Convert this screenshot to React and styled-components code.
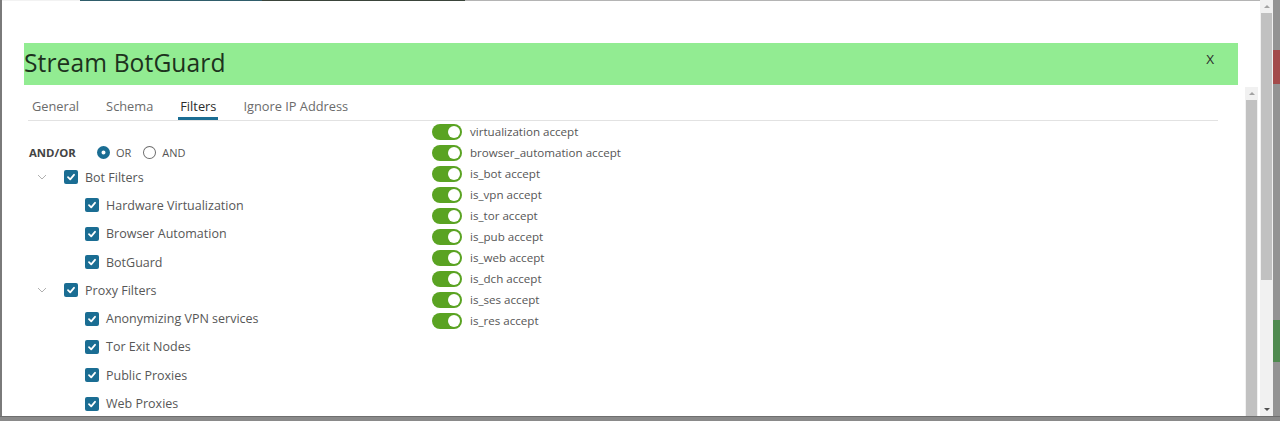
import React from "react";
import styled, { createGlobalStyle } from "styled-components";

const GlobalStyle = createGlobalStyle`
  html, body {
    margin: 0;
    padding: 0;
    height: 421px;
    overflow: hidden;
    background: #7e7e7e;
    font-family: "Open Sans", "Liberation Sans", sans-serif;
  }
  * { box-sizing: border-box; }
`;

const BOT_FILTERS = ["Hardware Virtualization", "Browser Automation", "BotGuard"];
const PROXY_FILTERS = [
  "Anonymizing VPN services",
  "Tor Exit Nodes",
  "Public Proxies",
  "Web Proxies",
];
const ACCEPTS = [
  "virtualization accept",
  "browser_automation accept",
  "is_bot accept",
  "is_vpn accept",
  "is_tor accept",
  "is_pub accept",
  "is_web accept",
  "is_dch accept",
  "is_ses accept",
  "is_res accept",
];

const Check = () => (
  <svg width="10" height="10" viewBox="0 0 10 10">
    <polyline
      points="2,5.2 4.2,7.3 8,2.8"
      fill="none"
      stroke="#fff"
      strokeWidth="1.8"
      strokeLinecap="round"
      strokeLinejoin="round"
    />
  </svg>
);

const Chevron = () => (
  <svg width="10" height="6" viewBox="0 0 10 6">
    <polyline points="1,1 5,5 9,1" fill="none" stroke="#b0b0b0" strokeWidth="1" />
  </svg>
);

const App = () => {
  return (
    <>
      <GlobalStyle />
      <Screen>
        <Stage>
          <Edge />
          <Modal>
            <TopStrip>
              <Strip $w={78} $c="#f2f2f2" />
              <Strip $w={182} $c="#2f5d6b" />
              <Strip $w={203} $c="#3a443a" />
              <Strip $c="#b4b4b4" />
            </TopStrip>
            <Dialog>
              <Header>
                <Title>Stream BotGuard</Title>
                <Close>X</Close>
              </Header>
              <Body>
                <Content>
                  <TabNav>
                    <Tab>General</Tab>
                    <Tab>Schema</Tab>
                    <Tab $active>Filters</Tab>
                    <Tab>Ignore IP Address</Tab>
                  </TabNav>
                  <Columns>
                    <LeftCol>
                      <ModeRow>
                        <ModeLabel>AND/OR</ModeLabel>
                        <RadioItem>
                          <Radio $checked />
                          OR
                        </RadioItem>
                        <RadioItem>
                          <Radio />
                          AND
                        </RadioItem>
                      </ModeRow>
                      <TreeRow>
                        <Chevron />
                        <CheckBox $parent>
                          <Check />
                        </CheckBox>
                        <Label>Bot Filters</Label>
                      </TreeRow>
                      {BOT_FILTERS.map((f) => (
                        <TreeRow key={f} $child>
                          <CheckBox>
                            <Check />
                          </CheckBox>
                          <Label>{f}</Label>
                        </TreeRow>
                      ))}
                      <TreeRow>
                        <Chevron />
                        <CheckBox $parent>
                          <Check />
                        </CheckBox>
                        <Label>Proxy Filters</Label>
                      </TreeRow>
                      {PROXY_FILTERS.map((f) => (
                        <TreeRow key={f} $child>
                          <CheckBox>
                            <Check />
                          </CheckBox>
                          <Label>{f}</Label>
                        </TreeRow>
                      ))}
                    </LeftCol>
                    <RightCol>
                      {ACCEPTS.map((a) => (
                        <ToggleRow key={a}>
                          <Toggle />
                          <ToggleLabel>{a}</ToggleLabel>
                        </ToggleRow>
                      ))}
                    </RightCol>
                  </Columns>
                </Content>
                <Scrollbar $inner>
                  <Arrow $up />
                  <Thumb />
                </Scrollbar>
              </Body>
            </Dialog>
          </Modal>
          <Scrollbar>
            <Arrow $up />
            <Thumb $h={267} />
            <Track />
            <Arrow />
          </Scrollbar>
          <RightEdge>
            <EdgeBlock $top={50} $h={34} $c="#a34a4a" />
            <EdgeBlock $top={320} $h={42} $c="#4f8a4f" />
          </RightEdge>
        </Stage>
        <Bottom />
      </Screen>
    </>
  );
};

export default App;

const Screen = styled.div`
  height: 421px;
  display: flex;
  flex-direction: column;
  background: #7e7e7e;
`;

const Stage = styled.div`
  height: 416px;
  display: flex;
`;

const Edge = styled.div`
  width: 2px;
  background: #7a7a7a;
`;

const Bottom = styled.div`
  flex: 1;
  background: #8a8a8a;
  border-top: 1px solid #6e6e6e;
`;

const Modal = styled.div`
  width: 1258px;
  background: #fff;
  display: flex;
  flex-direction: column;
`;

const TopStrip = styled.div`
  height: 1px;
  display: flex;
`;

const Strip = styled.div`
  width: ${(p) => (p.$w ? `${p.$w}px` : "auto")};
  flex: ${(p) => (p.$w ? "none" : 1)};
  background: ${(p) => p.$c};
`;

const Dialog = styled.div`
  flex: 1;
  min-height: 0;
  display: flex;
  flex-direction: column;
  padding: 42px 0 0 22px;
`;

const Header = styled.div`
  height: 42px;
  margin-right: 22px;
  background: #92ec92;
  display: flex;
  align-items: center;
  justify-content: space-between;
`;

const Title = styled.h3`
  margin: -4px 0 0 0;
  font-size: 24.6px;
  font-weight: 400;
  color: #1d321d;
  letter-spacing: 0.1px;
`;

const Close = styled.span`
  font-size: 13.5px;
  color: #2a2a2a;
  margin-right: 24px;
  margin-top: -10px;
`;

const Body = styled.div`
  flex: 1;
  min-height: 0;
  display: flex;
  margin-top: 2px;
`;

const Content = styled.div`
  flex: 1;
  overflow: hidden;
  padding-top: 9px;
`;

const TabNav = styled.nav`
  display: flex;
  gap: 23px;
  margin: 0 27px 0 4px;
  padding-left: 2px;
  border-bottom: 1px solid #e2e2e2;
`;

const Tab = styled.span`
  padding: 0 2px;
  line-height: 21px;
  font-size: 12.8px;
  color: ${(p) => (p.$active ? "#2b2b2b" : "#6b6b6b")};
  border-bottom: 3px solid ${(p) => (p.$active ? "#1a6d93" : "transparent")};
`;

const Columns = styled.div`
  display: flex;
`;

const LeftCol = styled.div`
  width: 408px;
  padding: 21px 0 0 5px;
  display: flex;
  flex-direction: column;
`;

const ModeRow = styled.div`
  height: 20px;
  display: flex;
  align-items: center;
  margin-bottom: 1px;
`;

const ModeLabel = styled.span`
  font-size: 11.4px;
  font-weight: 700;
  color: #444;
  width: 68px;
`;

const RadioItem = styled.label`
  display: flex;
  align-items: center;
  gap: 6px;
  font-size: 11px;
  color: #555;
  margin-right: 12px;
`;

const Radio = styled.span`
  width: 13px;
  height: 13px;
  border-radius: 50%;
  background: #fff;
  box-shadow: ${(p) =>
    p.$checked ? "inset 0 0 0 4.5px #1a6d93" : "inset 0 0 0 1px #6b6b6b"};
`;

const TreeRow = styled.div`
  height: 28.3px;
  display: flex;
  align-items: center;
  padding-left: ${(p) => (p.$child ? "56px" : "8px")};
`;

const CheckBox = styled.span`
  width: 14px;
  height: 14px;
  border-radius: 2px;
  background: #1a6d93;
  display: flex;
  align-items: center;
  justify-content: center;
  margin-left: ${(p) => (p.$parent ? "17px" : "0")};
`;

const Label = styled.span`
  font-size: 12.5px;
  color: #575757;
  margin-left: 7px;
`;

const RightCol = styled.div`
  display: flex;
  flex-direction: column;
`;

const ToggleRow = styled.div`
  height: 21px;
  display: flex;
  align-items: center;
  gap: 8px;
`;

const Toggle = styled.span`
  position: relative;
  width: 30px;
  height: 16px;
  border-radius: 8px;
  background: #5aa322;

  &::after {
    content: "";
    position: absolute;
    right: 2px;
    top: 2px;
    width: 12px;
    height: 12px;
    border-radius: 50%;
    background: #fff;
  }
`;

const ToggleLabel = styled.span`
  font-size: 11.6px;
  color: #565656;
`;

const Scrollbar = styled.div`
  width: 13px;
  background: #f1f1f1;
  display: flex;
  flex-direction: column;
  margin-right: ${(p) => (p.$inner ? "2px" : "0")};
`;

const Arrow = styled.div`
  height: 13px;
  display: flex;
  align-items: center;
  justify-content: center;

  &::before {
    content: "";
    border-left: 3px solid transparent;
    border-right: 3px solid transparent;
    ${(p) =>
      p.$up ? "border-bottom: 3px solid #a3a3a3;" : "border-top: 3px solid #505050;"}
  }
`;

const Thumb = styled.div`
  margin: 0 1px;
  background: #c1c1c1;
  ${(p) => (p.$h ? `height: ${p.$h}px;` : "flex: 1;")}
`;

const Track = styled.div`
  flex: 1;
`;

const RightEdge = styled.div`
  flex: 1;
  background: #939393;
  position: relative;
`;

const EdgeBlock = styled.div`
  position: absolute;
  left: 0;
  right: 0;
  top: ${(p) => p.$top}px;
  height: ${(p) => p.$h}px;
  background: ${(p) => p.$c};
`;
